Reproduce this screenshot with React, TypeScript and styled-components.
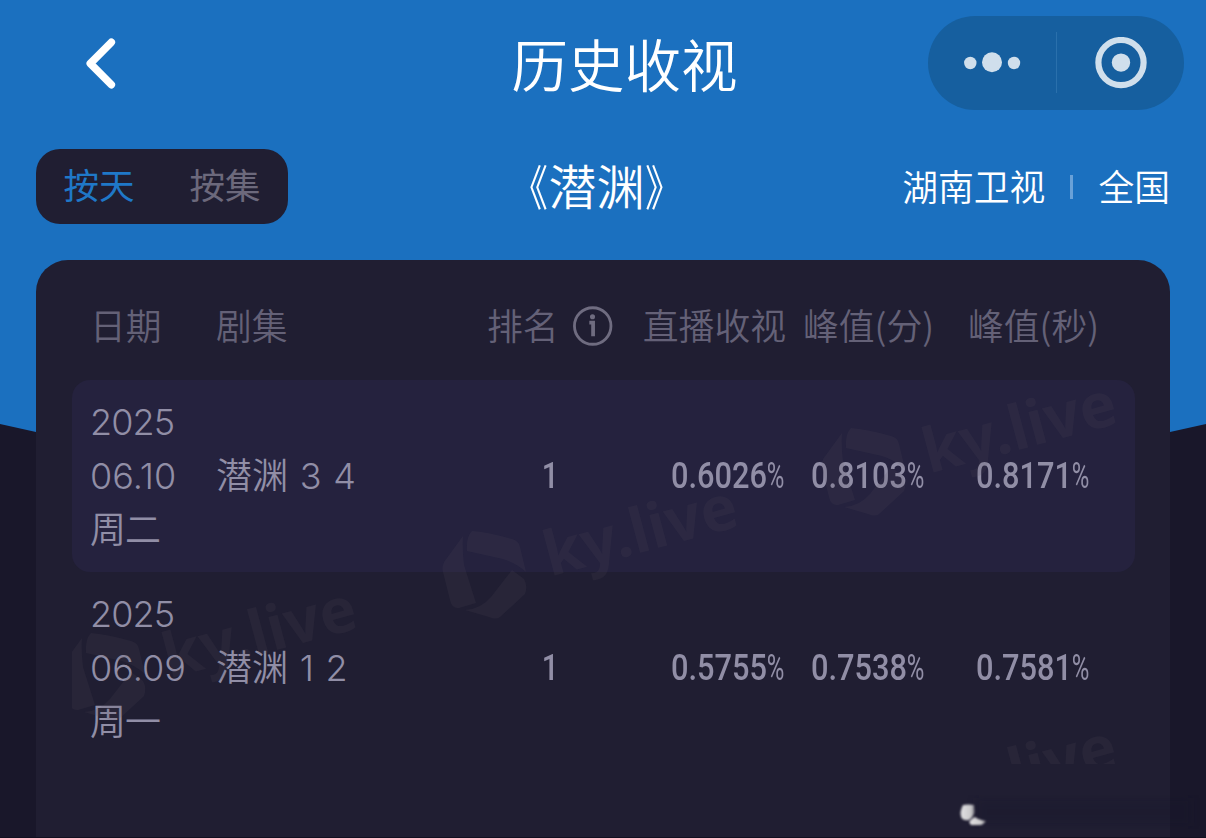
import React from "react";
import styled, {createGlobalStyle} from "styled-components";

const GlobalStyle = createGlobalStyle`
* {
  box-sizing: border-box;
}
body {
  margin: 0;
  background: #19172a;
  font-family: Inter, "Noto Sans CJK SC", sans-serif;
  font-weight: 350;
}
`

const Page = styled.div`
position: relative;
width: 1206px;
height: 838px;
overflow: hidden;
display: flex;
flex-direction: column;
isolation: isolate;
`

const Backdrop = styled.div`
position: absolute;
z-index: -1;
inset: 0;
background: #1b70bf;
clip-path: polygon(0 0, 100% 0, 100% 424px, 1170px 432px, 603px 500px, 36px 432px, 0 424px);
`

const NavBar = styled.header`
height: 125px;
display: grid;
grid-template-columns: 278px 1fr 278px;
align-items: center;
`

const BackButton = styled.button`
justify-self: start;
margin-left: 84px;
padding: 0;
border: 0;
background: none;
line-height: 0;
`

const NavTitle = styled.h1`
margin: 0;
padding: 0 0 2px 43px;
text-align: center;
font: 350 56.5px/84px "Noto Sans CJK SC", sans-serif;
color: #fff;
`

const Capsule = styled.div`
width: 256px;
height: 94px;
border-radius: 47px;
background: #165f9f;
display: grid;
grid-template-columns: 128px 1px 127px;
align-items: center;
justify-items: center;
`

const CapsuleLine = styled.i`
width: 1px;
height: 61px;
background: #2a70ac;
`

const SubBar = styled.div`
height: 75px;
margin: 24px 36px 36px;
display: grid;
grid-template-columns: 300px 1fr 300px;
align-items: center;
`

const Tabs = styled.div`
width: 252px;
height: 75px;
padding-bottom: 6px;
border-radius: 24px;
background: #201e32;
display: grid;
grid-template-columns: 1fr 1fr;
align-items: center;
`

const Tab = styled.span<{ $active?: boolean }>`
text-align: center;
font: 400 35.5px/54px "Noto Sans CJK SC", sans-serif;
color: ${p => p.$active ? '#1f78c8' : '#6c697c'};
`

const DramaName = styled.h2`
margin: 0 0 6px;
padding-right: 13px;
text-align: center;
font: 350 48px/64px "Noto Sans CJK SC", sans-serif;
color: #fff;
`

const Bracket = styled.span<{ $side: 'left' | 'right' }>`
display: inline-block;
transform: scaleX(.78);
transform-origin: ${p => p.$side === 'left' ? 'right' : 'left'} center;
`

const Channel = styled.div`
padding-bottom: 3px;
display: flex;
align-items: center;
justify-content: flex-end;
gap: 25px;
font: 350 35.8px/54px "Noto Sans CJK SC", sans-serif;
color: #fff;
`

const ChannelLine = styled.i`
width: 3px;
height: 24px;
margin-top: 3px;
background: #69a1d8;
`

const Card = styled.main`
position: relative;
flex: 1;
margin: 0 36px;
padding: 0 35px 0 36px;
border-radius: 32px 32px 0 0;
background: #201e32;
`

const Row = styled.div<{ $striped?: boolean }>`
height: 192px;
padding: 0 19px 0 18px;
border-radius: 18px;
background: ${p => p.$striped ? '#25223e' : 'transparent'};
color: #918ea6;
display: grid;
grid-template-columns: 126px 271px 126px 173px 165px 165px;
align-items: center;
`

const HeadRow = styled(Row)`
height: 120px;
padding-top: 7px;
color: #646177;
font: 350 35.8px/54px "Noto Sans CJK SC", sans-serif;
`

const Cell = styled.div<{ $align?: string }>`
display: flex;
justify-content: ${p => p.$align || 'flex-start'};
align-items: center;
white-space: nowrap;
`

const DateText = styled.div`
font-size: 36px;
line-height: 54px;
letter-spacing: -0.9px;
&:nth-child(2){
  letter-spacing: 0;
}
`

const Episode = styled.div`
font-size: 36px;
line-height: 54px;
white-space: pre;
word-spacing: 1.6px;
`

// condensed figures
const Figure = styled.span`
display: block;
width: 115px;
font: 500 36px/54px Roboto, sans-serif;
white-space: nowrap;
transform: scaleX(.855);
transform-origin: left center;
`

const Percent = styled.span`
display: inline-block;
font-weight: 400;
transform: scaleX(.78);
transform-origin: left center;
`

const Rank = styled.span`
font: 500 36px/54px Roboto, sans-serif;
transform: scaleX(.83);
`

const InfoMark = styled.svg`
margin: 5px 0 0 13px;
`

const WatermarkLayer = styled.div`
position: absolute;
left: 36px;
top: 120px;
width: 1063px;
height: 384px;
overflow: hidden;
pointer-events: none;
`

const Mark = styled.div`
position: absolute;
width: 86px;
height: 90px;
color: rgba(88, 82, 92, 0.15);
`

const MarkText = styled.span`
position: absolute;
left: 107px;
top: -17px;
font: 700 62px/80px "Noto Sans", sans-serif;
white-space: nowrap;
transform: rotate(-15deg);
transform-origin: 0 60px;
`

const Corner = styled.svg`
position: absolute;
left: 956px;
top: 784px;
`

const BottomEdge = styled.div`
position: absolute;
left: 0;
right: 0;
bottom: 0;
height: 1px;
background: #121020;
`

interface RatingItem {
    date: string[]
    episode: string
    rank: number
    rates: string[]
}

const list: RatingItem[] = [
    {date: ['2025', '06.10', '周二'], episode: '潜渊 3 4', rank: 1, rates: ['0.6026', '0.8103', '0.8171']},
    {date: ['2025', '06.09', '周一'], episode: '潜渊 1 2', rank: 1, rates: ['0.5755', '0.7538', '0.7581']},
]

const marks = [
    {x: -11, y: 252},
    {x: 370, y: 150},
    {x: 749, y: 47},
    {x: 749, y: 390},
]

const InfoIcon = () => (
    <InfoMark width="44" height="44" viewBox="0 0 44 44" fill="none">
        <circle cx="22" cy="22" r="19.4" stroke="#6f6c80" strokeWidth="3"/>
        <circle cx="21.8" cy="12.2" r="2.7" fill="#6f6c80"/>
        <path d="M18.4 18.4h4v14.6" stroke="#6f6c80" strokeWidth="4"/>
    </InfoMark>
)

const LogoIcon = () => (
    <svg width="86" height="90" viewBox="0 0 86 90" fill="currentColor">
        <path d="M30 1Q45 2 70 9Q77 11 78 17L84 42Q74 33 61 29L25 21Q24 7 30 1Z"/>
        <path d="M21 6Q20 18 22 35L34 73L17 78Q10 79 8 70L1 42Q-1 35 5 28Z"/>
        <path d="M70 40L82 49Q86 56 83 64L58 87Q54 90 47 87L23 80Q39 79 49 67Z"/>
    </svg>
)

const Rate: React.FC<{ value: string }> = ({value}) => (
    <Figure>{value}<Percent>%</Percent></Figure>
)

const RatingRow: React.FC<{ item: RatingItem, striped: boolean }> = ({item, striped}) => (
    <Row $striped={striped}>
        <div>
            {item.date.map(d => <DateText key={d}>{d}</DateText>)}
        </div>
        <Episode>{item.episode}</Episode>
        <Cell $align="center"><Rank>{item.rank}</Rank></Cell>
        <Cell $align="flex-end"><Rate value={item.rates[0]}/></Cell>
        <Cell $align="center"><Rate value={item.rates[1]}/></Cell>
        <Cell $align="center"><Rate value={item.rates[2]}/></Cell>
    </Row>
)

const App: React.FC = () => {
    return (
        <Page>
            <GlobalStyle/>
            <Backdrop/>
            <NavBar>
                <BackButton>
                    <svg width="34" height="54" viewBox="0 0 34 54" fill="none" stroke="#fff" strokeWidth="7.6"
                         strokeLinecap="round" strokeLinejoin="round">
                        <path d="M27.3 6.3L6.3 27.5L27.3 48.7"/>
                    </svg>
                </BackButton>
                <NavTitle>历史收视</NavTitle>
                <Capsule>
                    <svg width="58" height="22" viewBox="0 0 58 22" fill="#d0dfec">
                        <circle cx="7.3" cy="11" r="6.2"/>
                        <circle cx="29" cy="10.3" r="10"/>
                        <circle cx="51" cy="11" r="6.2"/>
                    </svg>
                    <CapsuleLine/>
                    <svg width="52" height="52" viewBox="0 0 52 52">
                        <circle cx="26" cy="25.6" r="22.6" fill="none" stroke="#d0dfec" strokeWidth="6.2"/>
                        <circle cx="26" cy="25.6" r="9.2" fill="#d0dfec"/>
                    </svg>
                </Capsule>
            </NavBar>
            <SubBar>
                <Tabs>
                    <Tab $active>按天</Tab>
                    <Tab>按集</Tab>
                </Tabs>
                <DramaName>
                    <Bracket $side="left">《</Bracket>潜渊<Bracket $side="right">》</Bracket>
                </DramaName>
                <Channel>
                    <span>湖南卫视</span>
                    <ChannelLine/>
                    <span>全国</span>
                </Channel>
            </SubBar>
            <Card>
                <HeadRow>
                    <Cell>日期</Cell>
                    <Cell>剧集</Cell>
                    <Cell>排名<InfoIcon/></Cell>
                    <Cell $align="flex-end">直播收视</Cell>
                    <Cell $align="center">峰值(分)</Cell>
                    <Cell $align="center">峰值(秒)</Cell>
                </HeadRow>
                {list.map((item, i) => <RatingRow key={item.date[1]} item={item} striped={i % 2 === 0}/>)}
                <WatermarkLayer>
                    {marks.map(m => (
                        <Mark key={`${m.x}-${m.y}`} style={{left: m.x, top: m.y}}>
                            <LogoIcon/>
                            <MarkText>ky.live</MarkText>
                        </Mark>
                    ))}
                </WatermarkLayer>
            </Card>
            <Corner width="250" height="54" viewBox="0 0 250 54">
                <defs>
                    <linearGradient id="moon" x1="0" y1="0" x2="1" y2="0">
                        <stop offset="0" stopColor="#e2e1e3"/>
                        <stop offset=".75" stopColor="#c9c8ca"/>
                        <stop offset="1" stopColor="#77757f"/>
                    </linearGradient>
                    <filter id="soft" x="-20%" y="-20%" width="140%" height="140%">
                        <feGaussianBlur stdDeviation=".8"/>
                    </filter>
                    <filter id="haze">
                        <feGaussianBlur stdDeviation="5"/>
                    </filter>
                </defs>
                <rect x="20" y="14" width="215" height="28" fill="#17152a" opacity=".25" filter="url(#haze)"/>
                <g fill="url(#moon)" filter="url(#soft)">
                    <path d="M7 21Q12 20 18 21L18.5 28Q18 32 13 36Q8 37 5.500 34Q3 28 7 21Z"/>
                    <path d="M13 38Q16 34 19 33Q23 36 30 37Q27 41 24 41H15Z"/>
                </g>
            </Corner>
            <BottomEdge/>
        </Page>
    );
};

export default App;
